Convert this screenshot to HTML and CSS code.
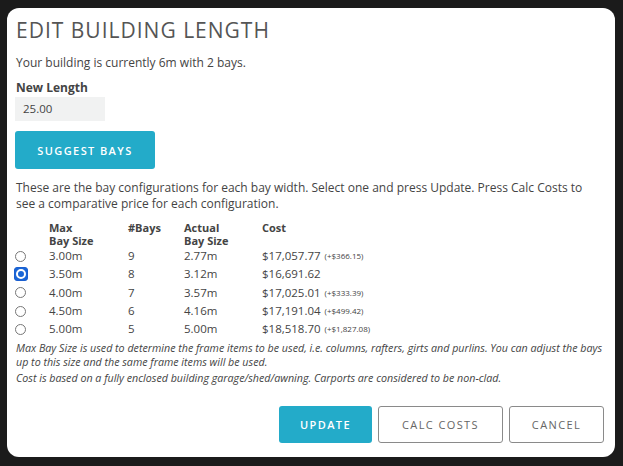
FILE: index.html
```html
<!DOCTYPE html>
<html>
<head>
<meta charset="utf-8">
<link rel="stylesheet" href="styles.css">
</head>
<body>
<div class="modal">
  <h1 class="title">EDIT BUILDING LENGTH</h1>
  <p class="intro">Your building is currently 6m with 2 bays.</p>
  <label class="label">New Length</label>
  <div class="input">25.00</div>
  <button class="btn btn-primary suggest">SUGGEST BAYS</button>
  <p class="desc">These are the bay configurations for each bay width. Select one and press Update. Press Calc Costs to see a comparative price for each configuration.</p>
  <div class="grid">
    <div class="head"></div>
    <div class="head"><div class="hl">Max</div><div class="hl">Bay Size</div></div>
    <div class="head"><div class="hl">#Bays</div></div>
    <div class="head"><div class="hl">Actual</div><div class="hl">Bay Size</div></div>
    <div class="head"><div class="hl">Cost</div></div>

    <div class="cell"><span class="radio"></span></div>
    <div class="cell">3.00m</div><div class="cell">9</div><div class="cell">2.77m</div>
    <div class="cell">$17,057.77 <small>(+$366.15)</small></div>

    <div class="cell"><span class="radio checked"><span class="dot"></span></span></div>
    <div class="cell">3.50m</div><div class="cell">8</div><div class="cell">3.12m</div>
    <div class="cell">$16,691.62</div>

    <div class="cell"><span class="radio"></span></div>
    <div class="cell">4.00m</div><div class="cell">7</div><div class="cell">3.57m</div>
    <div class="cell">$17,025.01 <small>(+$333.39)</small></div>

    <div class="cell"><span class="radio"></span></div>
    <div class="cell">4.50m</div><div class="cell">6</div><div class="cell">4.16m</div>
    <div class="cell">$17,191.04 <small>(+$499.42)</small></div>

    <div class="cell"><span class="radio"></span></div>
    <div class="cell">5.00m</div><div class="cell">5</div><div class="cell">5.00m</div>
    <div class="cell">$18,518.70 <small>(+$1,827.08)</small></div>
  </div>
  <p class="note">Max Bay Size is used to determine the frame items to be used, i.e. columns, rafters, girts and purlins. You can adjust the bays up to this size and the same frame items will be used.</p>
  <p class="note note2">Cost is based on a fully enclosed building garage/shed/awning. Carports are considered to be non-clad.</p>
  <div class="actions">
    <button class="btn btn-primary update">UPDATE</button>
    <button class="btn btn-outline calc">CALC COSTS</button>
    <button class="btn btn-outline cancel">CANCEL</button>
  </div>
</div>
</body>
</html>
```
FILE: styles.css
```css
html, body {
  margin: 0;
  padding: 0;
  background: #1b1b1b;
  width: 623px;
  height: 466px;
  overflow: hidden;
}
.modal {
  margin: 8px 0 0 7px;
  width: 608px;
  height: 449px;
  box-sizing: border-box;
  background: #fff;
  border-radius: 12px;
  padding: 0 11px 0 8px;
  display: flex;
  flex-direction: column;
  font-family: "Open Sans", "DejaVu Sans", sans-serif;
  color: #444;
}
.title {
  margin: 8px 0 0 1px;
  font-size: 21px;
  line-height: 28px;
  font-weight: 400;
  letter-spacing: 1px;
  color: #555;
}
.intro {
  margin: 11px 0 0 1px;
  font-size: 12px;
  line-height: 16px;
}
.label {
  margin: 9px 0 0 1px;
  font-size: 12px;
  line-height: 16px;
  font-weight: 700;
}
.input {
  margin-top: 1px;
  width: 90px;
  height: 24px;
  box-sizing: border-box;
  background: #f1f2f2;
  font-size: 11.5px;
  line-height: 24px;
  padding-left: 8px;
}
.btn {
  font-family: "Open Sans", "DejaVu Sans", sans-serif;
  font-size: 11px;
  font-weight: 600;
  letter-spacing: 1.4px;
  border-radius: 3px;
  box-sizing: border-box;
  cursor: pointer;
}
.btn-primary {
  background: #23abc9;
  color: #fff;
  border: none;
}
.btn-outline {
  background: #fff;
  color: #666;
  border: 1px solid #8a8a8a;
  font-weight: 400;
}
.suggest {
  margin-top: 10px;
  width: 140px;
  height: 38px;
  align-self: flex-start;
}
.desc {
  margin: 11px 0 0 1px;
  font-size: 12px;
  line-height: 16px;
}
.grid {
  margin-top: 10px;
  display: grid;
  grid-template-columns: 34px 79px 56px 78px auto;
  font-size: 11.5px;
}
.head {
  font-weight: 700;
  font-size: 11px;
}
.hl {
  height: 12.5px;
  line-height: 12px;
}
.cell {
  height: 18.3px;
  line-height: 18px;
  display: flex;
  align-items: center;
}
.cell small {
  font-size: 8px;
  margin-left: 4px;
}
.radio {
  display: block;
  width: 11px;
  height: 11px;
  box-sizing: border-box;
  border: 1px solid #777;
  border-radius: 50%;
}
.radio.checked {
  width: 14px;
  height: 14px;
  margin-left: -1px;
  border: 1.5px solid #1a5fd0;
  border-radius: 3px;
  background: #1a66d6;
  display: flex;
  align-items: center;
  justify-content: center;
}
.radio.checked .dot {
  width: 10px;
  height: 10px;
  box-sizing: border-box;
  border-radius: 50%;
  border: 2px solid #fff;
  background: #1a66d6;
}
.note {
  margin: 3px 0 0 1px;
  font-size: 10.7px;
  line-height: 14px;
  font-style: italic;
}
.note2 {
  margin-top: 2px;
}
.actions {
  margin-top: auto;
  margin-bottom: 14px;
  display: flex;
  justify-content: flex-end;
  gap: 6px;
}
.actions .btn {
  height: 37px;
}
.update { width: 93px; }
.calc { width: 125px; }
.cancel { width: 95px; }
```
